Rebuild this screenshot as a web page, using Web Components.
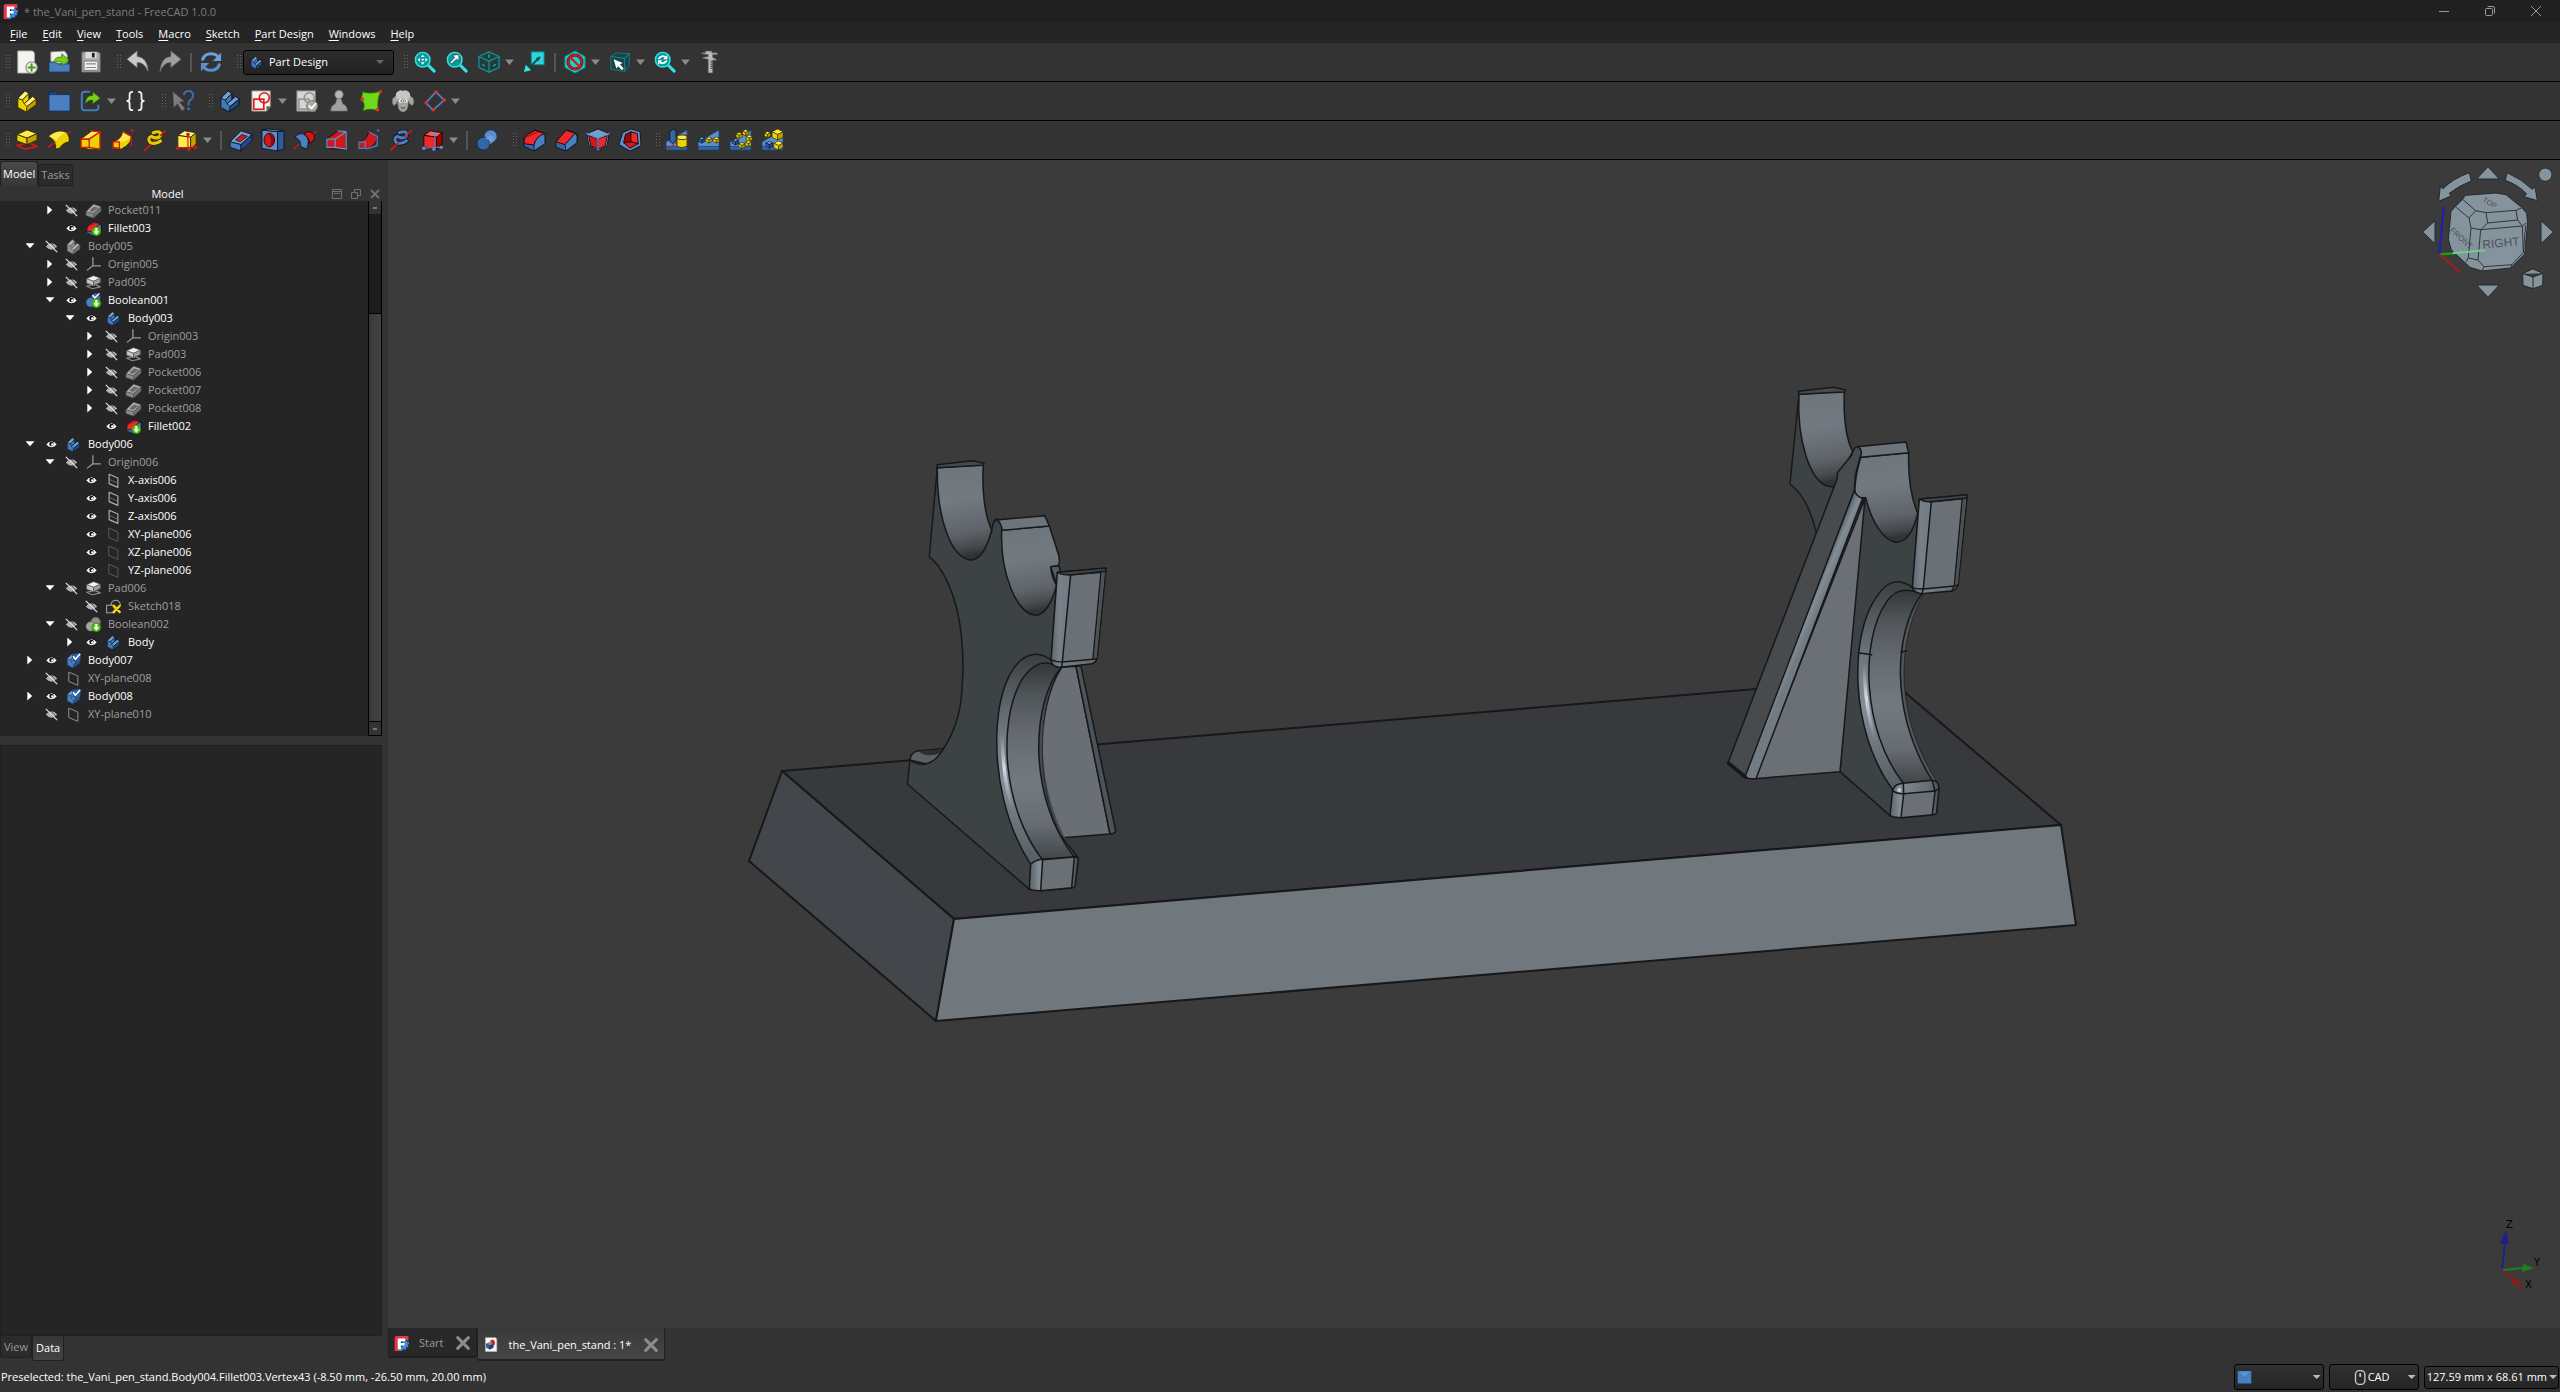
<!DOCTYPE html>
<html lang="en">
<head>
<meta charset="utf-8">
<title>the_Vani_pen_stand - FreeCAD 1.0.0</title>
<style>
html, body { margin: 0; height: 100%; }
body { background: #333; color: #fff; font: 11px/16px "Open Sans", "Noto Sans", sans-serif; overflow: hidden; }
</style>
</head>
<body>
<fc-app></fc-app>
<script>
/* ---------- icon library: every icon lives in a 24 x 24 box ---------- */
const poly = (pts, fill, stroke = '#0b1521', w = 1) =>
  `<polygon points="${pts}" fill="${fill}" stroke="${stroke}" stroke-width="${w}" stroke-linejoin="round"/>`;
const line = (d, stroke, w = 1.5, extra = '') =>
  `<path d="${d}" fill="none" stroke="${stroke}" stroke-width="${w}" stroke-linejoin="round" stroke-linecap="round" ${extra}/>`;
const dot = (x, y, r, fill, stroke = 'none', w = 1) =>
  `<circle cx="${x}" cy="${y}" r="${r}" fill="${fill}" stroke="${stroke}" stroke-width="${w}"/>`;

const bracket = (top, mid, dark, edge) =>
  poly('2,9 2,19 11,24 22,16 22,10 18,7 14,10 14,4 10,1', mid, edge) +
  poly('2,9 10,1 14,4 7,11', top, edge) +
  poly('7,11 14,4 14,10 9,15', mid, edge) +
  poly('9,15 18,7 22,10 12,18', top, edge) +
  poly('12,18 22,10 22,16 11,24', dark, edge);
const box = (top, left, right, edge) =>
  poly('2,7 9,2 22,4 16,9', top, edge) + poly('2,7 16,9 16,22 2,20', left, edge) + poly('16,9 22,4 22,16 16,22', right, edge);
const cubeIso = (x, y, s, top, left, right, edge) =>
  poly(`${x},${y - s} ${x + s},${y - s / 2} ${x},${y} ${x - s},${y - s / 2}`, top, edge, .7) +
  poly(`${x - s},${y - s / 2} ${x},${y} ${x},${y + s} ${x - s},${y + s / 2}`, left, edge, .7) +
  poly(`${x},${y} ${x + s},${y - s / 2} ${x + s},${y + s / 2} ${x},${y + s}`, right, edge, .7);
const yc = (x, y, s) => cubeIso(x, y, s, '#ffe94e', '#edd400', '#c4a000', '#302b00');
const bc = (x, y, s) => cubeIso(x, y, s, '#729fcf', '#3465a4', '#204a87', '#0b1521');
const pocket = (top, left, right, hole, edge) =>
  poly('0,14 12,2 24,6 12,17', top, edge) + poly('0,14 12,17 12,24 0,20', left, edge) +
  poly('12,17 24,6 24,13 12,24', right, edge) + poly('6,12 13,6 19,8 11,14', hole, edge, .8);
const pad = (top, left, right, edge, base) =>
  poly('1,18 10,22 23,19 14,15', 'none', base, 1.8) +
  poly('1,6 12,1 23,5 12,10', top, edge) + poly('1,6 12,10 12,17 1,13', left, edge) + poly('12,10 23,5 23,12 12,17', right, edge);
const lens = (inner) => line('M15 15L22 22', '#34e0e2', 3.4) + dot(9.5, 9.5, 8, '#06989a', '#34e0e2', 1.6) + inner;
const green = dot(16.5, 16.5, 7.2, '#4bc40d', '#2f7d06') + `<path d="M14.800 11h3.400v5.500h2.800L16.500 22l-4.500-5.500h2.800z" fill="#fff"/>`;
const check = line('M12 6L15 10L22 2', '#fff', 2.6);
const bools = (a, b, e) => dot(15.5, 8, 7.5, a, e) + dot(7.5, 15, 7.5, b, e);
const fil = poly('1,9 13,1 24,5 24,16 12,24 1,19', '#3465a4') +
  `<path d="M1 16Q1 8 6 5.500L13 1.500L24 5Q14 8 12 17.500Z" fill="#ef2929" stroke="#280000"/><path d="M4 9Q8 6 16 3.500" stroke="#a40000" fill="none"/>` +
  `<path d="M12 17.500Q14 8 24 5V16L12 24Z" fill="#4a7fc0" stroke="#0b1521"/>`;
const axis3 = (c) => line('M11 1V14H23M11 14L2 21', c, 2);
const plane = (c, w = 1.8) => line('M5 2L19 8V23L5 17Z', c, w);
const sk = (c) => `<rect x="3" y="10" width="11" height="11" fill="none" stroke="${c}" stroke-width="1.800"/><circle cx="14.500" cy="8.500" r="5.500" fill="none" stroke="${c}" stroke-width="1.800"/>`;
const wedge = poly('0,14 23,1 23,23 0,23', '#5b8fce', '#1d406f') + poly('0,19 23,19 23,23 0,23', '#3465a4', '#16325c', .6);

const ICONS = {
  logo: `<path d="M1 3Q1 0 4 0H23V7H10V24H1Z" fill="#e0394a"/><path d="M13 8H20L22 10L24 9V13L22 14L23 18L20 18L19 22L15 21L12 24H8V17H13Z" fill="#3c86d8"/><path d="M6 4H18V8.500H11V11H17V15H11V21H6Z" fill="#fff"/>`,
  new: poly('2,0 18,0 20,2 20,24 2,24', '#f3f3f1', '#b8b8b4') + dot(17, 18, 6.2, '#eeeeec', '#888a85', 1.2) + line('M17 14.500V21.500M13.500 18H20.500', '#4e9a06', 2.2),
  open: poly('3,1 18,0 21,4 21,16 3,16', '#f3f3f1', '#888') + poly('1,12 8,12 10,14 24,14 24,23 1,23', '#4a7fc0', '#16325c') + `<path d="M6 13Q8 5 15 7L15 3L23 10L16 16L15 12Q11 11 6 13Z" fill="#73d216" stroke="#2c6b04" stroke-width=".8"/>`,
  save: poly('2,1 20,1 22,3 22,23 2,23', '#a9aaa6', '#666') + `<rect x="6" y="1" width="12" height="7" fill="#ddd"/><rect x="13" y="2" width="3" height="5" fill="#222"/><rect x="4.500" y="11" width="15" height="10" fill="#f2f2f0" stroke="#777"/>` + line('M7 14H17M7 18H17', '#888', 1.2),
  undo: `<path d="M0 9L11 0V6Q22 7 23 22Q19 12 11 12.500V18Z" fill="#c9c9c6" stroke="#777" stroke-width=".7"/>`,
  redo: `<path d="M24 9L13 0V6Q2 7 1 23Q5 12 13 12.500V18Z" fill="#9f9f9c" stroke="#666" stroke-width=".7"/>`,
  refresh: line('M3 9Q5 3 12 3Q18 3 20 7', '#6a9fdb', 3.4) + `<path d="M23 2V11H14Z" fill="#6a9fdb"/>` + line('M21 15Q19 21 12 21Q6 21 4 17', '#5b8fce', 3.4) + `<path d="M1 22V13H10Z" fill="#5b8fce"/>`,
  body: bracket('#729fcf', '#4279bb', '#204a87', '#0b1521'),
  bodyGray: bracket('#b4b4b2', '#8f8f8d', '#6f6f6d', '#555'),
  group: bracket('#fff28a', '#edd400', '#c4a000', '#302b00'),
  zoomFit: lens(`<path d="M9.500 4l2.200 2.600h-4.400zM9.500 15l2.200-2.600h-4.400zM4 9.500l2.600-2.200v4.400zM15 9.500l-2.600-2.200v4.400z" fill="#fff"/>` + dot(9.5, 9.5, 1.2, '#fff')),
  zoomSel: lens(`<path d="M14 4V11L11.500 8.800L6 14L4.500 12.500L9.500 7L7.300 4.500Z" fill="#fff" stroke="#222" stroke-width=".6"/>`),
  zoomSync: lens(line('M5.500 8Q9.500 3.500 13.500 7.500M13.500 11Q9.500 15.500 5.500 11.500', '#fff', 2) + `<path d="M14.500 4V9H10ZM4.500 15V10H9Z" fill="#fff"/>`),
  cubeWire: poly('12,1 23,6 23,18 12,23 1,18 1,6', '#203c3d', '#159496', 1.4) + line('M1 6L12 11L23 6M12 11V23', '#159496', 1.3) + line('M12 4V7M5 15L7 16M19 15L17 16', '#34e0e2', 1),
  linkView: `<rect x="9" y="1" width="14" height="14" fill="#2bd6d8" stroke="#0b8c8e"/>` + line('M18 7L6 19', '#0a4a4b', 2) + dot(16, 9, 1.5, 'none', '#0a4a4b') + `<path d="M1 23L3 15L9 21Z" fill="#34e0e2"/>`,
  noDraw: poly('12,0 23,6 23,18 12,24 1,18 1,6', '#16d0d2', '#0c8c8e') + dot(12, 12, 7.6, 'none', '#5a0c0c', 3.4) + dot(12, 12, 7.6, 'none', '#d11a1a', 2) + line('M7 7L17 17', '#d11a1a', 2.4),
  selCube: poly('2,6 8,2 22,3 22,16 17,22 2,20', '#164446', '#187e80') + line('M2 6L17 8L22 3M17 8V22', '#187e80', 1.3) + `<path d="M5 9L15 13L12 14.500L16 19L14 21L10 16.500L8 19Z" fill="#fff"/>`,
  caliper: `<path d="M7 0H14V2H20V4H15V7L19 9V10H15V24H10V9L4 8V7L10 6V4L3 3V2H7Z" fill="#b9bab5" stroke="#555" stroke-width=".7"/>` + line('M13 11H14.500M13 13H14.500M13 15H14.500M13 17H14.500M13 19H14.500', '#333', 1),
  folder: poly('1,2 9,2 11,5 11,8 1,8', '#204a87', '#122b50') + poly('1,5 24,5 24,23 1,23', '#4a80c2', '#16325c'),
  link: line('M10 2H5Q2 2 2 5V19Q2 22 5 22H17Q20 22 20 19V17', '#3f7ac2', 2.2) + `<path d="M6 15Q6 6 14 6V2L22 9L14 15V11Q9 10 6 15Z" fill="#73d216" stroke="#2c6b04" stroke-width=".8"/>`,
  braces: line('M8 2Q5 2 5 5V9Q5 12 2.500 12Q5 12 5 15V19Q5 22 8 22M15 2Q18 2 18 5V9Q18 12 20.500 12Q18 12 18 15V19Q18 22 15 22', '#eee', 2),
  whats: `<path d="M1 2L13 12L8 13L14 20L11 23L6 15L2 19Z" fill="#7d7d7a" stroke="#555" stroke-width=".6"/>` + line('M13 5Q14 1 18 1Q23 1 23 6Q23 9 20 11Q18 12 18 16', '#3a6ea8', 2.2) + dot(18, 20.5, 1.7, '#3a6ea8'),
  sketch: poly('1,1 21,1 21,18 17,23 1,23', '#f4f4f0', '#9a9a94') + poly('21,18 17,18 17,23', '#55554f', '#888', .6) + sk('#e01b1b'),
  sketchGray: `<rect x="1" y="1" width="20" height="22" fill="#d5d5d2" stroke="#8b8b88"/>` + sk('#949491') + dot(17.5, 17.5, 6, '#a9a9a6', '#777') + line('M14.500 17.500L17 20L21.500 15', '#fff', 2),
  pawn: `<path d="M3 23Q3 17 8 15L10 9H14L16 15Q21 17 21 23Z" fill="#a0a09d" stroke="#6c6c69" stroke-width=".7"/>` + dot(12, 5, 4.6, '#b5b5b2', '#6c6c69', .7),
  binder: `<path d="M3 2Q12 5 23 1Q18 10 20 23Q11 19 3 23Q7 14 1 11Z" fill="#6fd81a" stroke="#2c6b04"/>` + dot(22, 2, 2, '#ef2929') + dot(2.5, 10, 2, '#ef2929') + dot(19, 21.5, 2, '#ef2929'),
  sheep: `<path d="M6 5L1 9Q-1 14 2 17Q5 16 6 12L7 20Q9 24 12 24Q15 24 17 20L18 12Q19 16 22 17Q25 14 23 9L18 5Z" fill="#a6a6a3" stroke="#6f6f6c" stroke-width=".7"/><path d="M5 9Q3 4 6 2Q9 -1 12 1Q15 -1 18 2Q21 4 19 9Q15 11 12 9Q9 11 5 9Z" fill="#c6c6c3"/>` + dot(9.5, 12, 2, '#fff') + dot(15, 12, 2, '#fff') + dot(10, 12, .9, '#222') + dot(14.5, 12, .9, '#222') + line('M10 19Q12 21 14 19', '#555', 1.2),
  datum: line('M13 2L22 11L10 22L2 14Z', '#4a80c2', 1.8) + dot(13, 2.5, 2, '#ef2929') + dot(22, 11, 2, '#ef2929') + dot(10, 21.5, 2, '#ef2929') + dot(2.5, 14, 2, '#ef2929'),
  pad: pad('#ffe94e', '#edd400', '#c4a000', '#302b00', '#d11818'),
  padGray: pad('#f1f1ef', '#c6c6c4', '#9c9c9a', '#555', '#8a8a88'),
  revolve: line('M0 20L24 3', '#d11818', 1.6) + `<path d="M1 8Q10 0 20 4Q24 8 23 14Q16 15 13 21L9 22Q8 13 1 8Z" fill="#c4a000" stroke="#302b00"/><path d="M1 8Q10 0 20 4Q12 7 9 14Q6 10 1 8Z" fill="#ffe94e"/><path d="M9 14Q12 7 20 4Q23 8 22.500 13Q16 15 12 20L9 21Z" fill="#edd400"/>`,
  loft: poly('1,11 13,2 22,3 22,22 9,22 1,20', '#edd400', '#302b00') + poly('1,11 13,2 22,3 10,11', '#ffe94e', '#302b00') + line('M1 11H10V20H1ZM13 2L22 3V22L10 20M10 11L22 3', '#d11818', 1.5),
  pipe: `<path d="M1 14Q10 12 12 2L21 8Q22 16 10 22L1 20Z" fill="#edd400" stroke="#302b00"/><path d="M8 14Q17 14 21 8L12 3Q12 10 4 14Z" fill="#ffe94e"/>` + line('M1 14H8V21H1ZM12 3L21 8V18', '#d11818', 1.5) + dot(22, 1.5, 1.4, '#d11818'),
  helix: line('M1 23L23 2', '#d11818', 1.6) + line('M10 4Q19 1 18 7Q15 12 8 8Q3 10 7 15Q13 17 18 13', '#302b00', 5) + line('M10 4Q19 1 18 7Q15 12 8 8Q3 10 7 15Q13 17 18 13', '#e3c90c', 3.4) + line('M1 23L7 17M18 7L23 2', '#d11818', 1.6),
  prim: box('#fff28a', '#ffe94e', '#c4a000', '#302b00') + line('M13 7V20L2 21M13 20L22 20', '#d11818', 1.2) + dot(13, 6, 2, '#d11818') + dot(2, 21, 2, '#d11818') + dot(21, 20, 2, '#d11818') + dot(14, 22, 2, '#d11818'),
  pocket: pocket('#729fcf', '#4a80c2', '#204a87', '#d11818', '#0b1521'),
  pocketGray: pocket('#b3b3b1', '#8b8b89', '#71716f', '#6a6a68', '#555'),
  hole: poly('0,1 17,3 17,24 0,21', '#5b8fce') + poly('0,1 7,0 24,2 17,3', '#729fcf') + poly('17,3 24,2 24,22 17,24', '#2b5b9c') + `<ellipse cx="8" cy="12" rx="5.800" ry="7.500" fill="#d11818" stroke="#280000"/><path d="M6 5Q12 10 9 19Q14 18 13.500 11Q12 5 6 5Z" fill="#8d0b0b"/>`,
  groove: line('M0 21L24 3', '#d11818', 1.6) + `<path d="M1 9Q6 3 12 6Q18 11 14 22L7 19Q8 12 1 9Z" fill="#4a80c2" stroke="#0b1521"/><path d="M12 4Q17 1 22 6L22 12Q20 13 17 16Q17 9 12 7Z" fill="#d11818" stroke="#280000"/>`,
  subLoft: poly('1,11 13,2 22,3 22,22 9,22 1,20', '#d11818', '#280000') + line('M1 11H10V20H1ZM13 2L22 3V22L10 20M10 11L22 3', '#5b93d8', 1.4),
  subPipe: `<path d="M1 14Q10 12 12 2L21 8Q22 16 10 22L1 20Z" fill="#d11818" stroke="#280000"/>` + line('M1 14H8V21H1ZM12 3L21 8V18L9 22', '#4a80c2', 1.5) + dot(22, 1.5, 1.2, '#4a80c2'),
  subHelix: line('M1 23L23 2', '#d11818', 1.6) + line('M10 4Q19 1 18 7Q15 12 8 8Q3 10 7 15Q13 17 18 13', '#0b1521', 5) + line('M10 4Q19 1 18 7Q15 12 8 8Q3 10 7 15Q13 17 18 13', '#4a80c2', 3.2) + line('M1 23L9 15M16 9L23 2', '#d11818', 1.6),
  subPrim: box('#ff5a5a', '#ef2929', '#a40000', '#280000') + line('M14 8V20L2 21M14 20L22 20', '#4a80c2', 1.2) + dot(14, 6, 1.8, '#5b93d8') + dot(2, 21, 1.8, '#5b93d8') + dot(21, 20, 1.8, '#5b93d8') + dot(13, 22, 1.8, '#5b93d8'),
  boolean: dot(16, 8, 7, '#5b8fce', '#1a3c6c') + dot(8, 16, 7, '#3465a4', '#122b50') + `<path d="M10 11Q16 11 15 17Q20 14 20 9Q14 5 10 11Z" fill="#729fcf"/>`,
  fillet: fil,
  chamfer: poly('1,14 13,1 24,5 24,15 12,24 1,20', '#3465a4') + poly('1,14 12,1.5 22,4.500 11,17', '#ef2929', '#280000') + poly('11,17 22,4.500 24,8 24,15 12,24', '#4a7fc0'),
  draft: poly('0,5 12,0 24,5 22,18 12,24 2,18', '#729fcf') + poly('2,7 11.500,11 11.500,22 4,18', '#d11818', '#280000') + poly('12.500,11 22,7 20,18 12.500,22', '#ef2929', '#280000') + line('M0 5L12 10L24 5M12 10V23', '#5b93d8', 1.5),
  thick: poly('4,4 13,0 23,3 24,18 12,24 0,17', '#5b8fce') + poly('7,6 13,3 13,15 5,15', '#8d0b0b', '#280000') + poly('13,3 20,5 21,16 13,14', '#ef2929', '#280000') + poly('5,15 13,14 21,16 12,21', '#d11818', '#280000'),
  mirror: wedge + poly('4,3 8,0 11,2 11,13 7,16 4,13', '#3465a4') + line('M2 22L23 6', '#d11818', 1.3, 'stroke-dasharray="3 2"') + `<path d="M12 9V19Q17 22 23 19V9Z" fill="#edd400" stroke="#302b00"/><ellipse cx="17.500" cy="9" rx="5.500" ry="2.500" fill="#ffe94e" stroke="#302b00"/>`,
  linear: wedge + bc(4, 12, 3.4) + yc(12, 12, 3.4) + yc(20, 12, 3.4),
  polar: wedge + yc(10, 7, 3.4) + yc(17, 4, 3.4) + yc(21, 10, 3.4) + bc(6, 14, 3.4) + yc(13, 18, 3.4) + yc(20, 16, 3.4),
  multi: wedge + yc(6, 6, 3.4) + yc(17, 6, 6) + bc(8, 17, 3.8) + yc(18, 18, 5),
  fillet2: fil + green,
  boolean2: bools('#3c6cae', '#4a80c2', '#1a3c6c') + line('M11 4L14 8L21 1', '#fff', 2.2) + green,
  boolGray: bools('#8f8f8d', '#a5a5a3', '#666') + green,
  bodyCheck: bracket('#729fcf', '#4a80c2', '#2a5797', '#1a3c6c') + poly('9,2 21,0 24,3 22,14 14,15', '#2f62a8', '#1a3c6c') + check,
  origin: axis3('#9b9b99'),
  axis: plane('#b0b0ae', 1.8) + line('M5 10L18 16', '#777775', 1.3),
  planeDark: plane('#6b5d5b', 1.4),
  plane: plane('#8e8e8c', 1.6),
  sketchX: `<rect x="1" y="10" width="13" height="12" fill="none" stroke="#9a9a98" stroke-width="1.800"/>` + line('M8 9Q9 2 16 2Q22 3 23 9', '#9a9a98', 1.8) + line('M12 11L22 21M22 11L12 21', '#f5d90a', 3.6),
  doc: poly('4,1 20,1 22,3 22,23 4,23', '#f6f6f4', '#bbb') + bc(11, 14, 5.5) + `<path d="M11 6L16 4L19 7V13L16 11Z" fill="#d11818"/>`,
  mail: `<rect x="1" y="2" width="22" height="20" fill="#4a80c2" stroke="#1d406f"/><path d="M1 2L12 13L23 2" fill="#5b92d4" stroke="#35629b"/>`,
  mouse: `<rect x="4" y="1" width="15" height="22" rx="6" fill="none" stroke="#c9c9c6" stroke-width="2.200"/><rect x="10" y="5" width="3" height="6" rx="1" fill="#c9c9c6"/>`,
  close: line('M4 4L20 20M20 4L4 20', '#8c8c8c', 4.6)
};

/* ---------- base class ---------- */
class FcElement extends HTMLElement {
  constructor() { super(); this.attachShadow({ mode: 'open' }); }
  paint(css, html) {
    this.shadowRoot.innerHTML = `<style>:host{box-sizing:border-box}*{box-sizing:border-box}button,select{font:inherit;color:inherit;margin:0}${css}</style>${html}`;
  }
}

customElements.define('fc-icon', class extends FcElement {
  connectedCallback() {
    this.paint(':host{display:inline-flex;flex:none;width:var(--icon,22px);height:var(--icon,22px)}svg{width:100%;height:100%;display:block;overflow:visible}',
      `<svg viewBox="0 0 24 24" aria-hidden="true">${ICONS[this.getAttribute('name')]}</svg>`);
  }
});

customElements.define('fc-titlebar', class extends FcElement {
  connectedCallback() {
    this.paint(`:host{display:flex;align-items:center;height:23px;background:#202020;color:#7d7d7d;padding-left:3px;--icon:15px}
      h1{font:inherit;margin:0 auto 0 6px}
      button{width:46px;height:23px;background:none;border:0;padding:0 2px 2px 0;display:flex;align-items:center;justify-content:center}
      svg{width:12px;height:12px;fill:none;stroke:#9a9a9a}`,
      `<fc-icon name="logo"></fc-icon><h1><slot></slot></h1>
      <button aria-label="Minimize"><svg viewBox="0 0 12 12"><path d="M1 6.500H11"/></svg></button>
      <button aria-label="Restore"><svg viewBox="0 0 12 12"><rect x="1.500" y="3.500" width="7" height="7" rx="1"/><path d="M3.500 1.500H9Q10.500 1.500 10.500 3V8.500"/></svg></button>
      <button aria-label="Close"><svg viewBox="0 0 12 12"><path d="M1 1L11 11M11 1L1 11"/></svg></button>`);
  }
});

customElements.define('fc-menubar', class extends FcElement {
  connectedCallback() {
    const items = this.getAttribute('items').split(',');
    this.paint(`:host{display:flex;height:20px;background:#252525;padding-left:3px}
      nav{display:flex;align-items:center;gap:1px}
      button{background:none;border:0;padding:3px 7px 1px;line-height:16px;white-space:nowrap}
      u{text-underline-offset:2px}`,
      `<nav>${items.map(t => `<button><u>${t[0]}</u>${t.slice(1)}</button>`).join('')}</nav>`);
  }
});

customElements.define('fc-toolbar-row', class extends FcElement {
  connectedCallback() {
    this.paint(':host{display:flex;align-items:center;gap:4px;height:39px;background:#333;border-bottom:1px solid #000}', '<slot></slot>');
  }
});

/* tools: icon names; "name+" adds a drop-down arrow, "|" is a separator */
customElements.define('fc-toolbar', class extends FcElement {
  connectedCallback() {
    const tools = (this.getAttribute('tools') || '').split(' ').filter(Boolean);
    const html = tools.map(t => {
      if (t === '|') return '<i class="sep"></i>';
      const drop = t.endsWith('+'), name = drop ? t.slice(0, -1) : t;
      return `<button class="tool" aria-label="${name}"><fc-icon name="${name}"></fc-icon></button>` +
        (drop ? `<button class="drop" aria-label="${name} options"></button>` : '');
    }).join('');
    this.paint(`:host{display:flex;align-items:center;height:38px}
      .grip{width:6px;height:16px;margin-left:5px;background:radial-gradient(circle,#666 0 0.9px,transparent 1px) 0 0/3px 3px}
      .tool{width:32px;height:32px;padding:0;border:0;background:none;display:flex;align-items:center;justify-content:center}
      .drop{width:9px;height:12px;margin-right:4px;padding:0;border:0;background:#8a8a8a;clip-path:polygon(0 30%,100% 30%,50% 75%)}
      .sep{width:2px;height:19px;margin:0 3px 0 4px;background:#555}`,
      `<span class="grip"></span>${html}<slot></slot>`);
  }
});

customElements.define('fc-workbench', class extends FcElement {
  connectedCallback() {
    this.paint(`:host{display:flex;align-items:center;margin-left:1px;width:151px;height:25px;--icon:13px;border:1px solid #000;border-radius:3px;background:linear-gradient(#2d2d2d,#222)}
      fc-icon{margin:0 0 0 6px}
      select{flex:1;appearance:none;background:none;border:0;height:23px;padding:0 0 0 6px;outline:0}
      i{width:8px;height:4px;margin-right:9px;background:#666;clip-path:polygon(0 0,100% 0,50% 100%)}`,
      `<fc-icon name="body"></fc-icon><select aria-label="Workbench"><option>Part Design</option></select><i></i>`);
  }
});

/* ---------- model tree ---------- */
customElements.define('fc-tree-item', class extends FcElement {
  connectedCallback() {
    const level = +this.getAttribute('level'), state = this.getAttribute('state') || '', off = this.hasAttribute('off');
    const eye = off
      ? `<svg viewBox="0 0 16 16"><path d="M1 8Q8 0 15 8Q8 16 1 8Z" fill="#b4b4b4"/><path d="M3 3L13 14M6 2L14 11" stroke="#252525" stroke-width=".8"/><path d="M1 1L15 15" stroke="#e6e6e6" stroke-width="1.400"/></svg>`
      : `<svg viewBox="0 0 16 16"><path d="M1 8Q8 -1 15 8Q8 16 1 8Z" fill="#fff" stroke="#000"/><circle cx="8" cy="7.500" r="2.800" fill="#111"/><circle cx="9" cy="8" r="1.500" fill="#fff"/></svg>`;
    this.paint(`:host{display:flex;align-items:center;height:18px;padding-left:${24 + 20 * level}px;color:${off ? '#9f9f9f' : '#fff'};--icon:15px}
      button{width:12px;height:12px;padding:0;border:0;background:none;display:flex;align-items:center;justify-content:center}
      button i{width:9px;height:9px;background:#fff;clip-path:${state === 'open' ? 'polygon(0 20%,100% 20%,50% 75%)' : 'polygon(20% 0,75% 50%,20% 100%)'}}
      .gap{width:12px}
      svg{width:13px;height:13px;margin:0 8px 0 9px}
      span.t{margin-left:7px;white-space:nowrap}`,
      `${state ? '<button aria-label="Toggle"><i></i></button>' : '<span class="gap"></span>'}${eye}<fc-icon name="${this.getAttribute('icon')}"></fc-icon><span class="t"><slot></slot></span>`);
  }
});

customElements.define('fc-tree', class extends FcElement {
  connectedCallback() {
    this.paint(`:host{display:flex;height:535px;background:#252525}
      .rows{flex:1}
      .bar{width:14px;display:flex;flex-direction:column;border:1px solid #000;border-width:0 1px 1px;background:#1d1d1d}
      .bar button{height:13px;padding:0;border:0;background:#333;display:flex;align-items:center;justify-content:center}
      .bar button i{width:4px;height:2px;background:#777}
      .thumb{flex:1;margin-top:99px;background:linear-gradient(90deg,#383838,#444);border:1px solid #000;border-width:1px 0}`,
      `<div class="rows"><slot></slot></div><div class="bar"><button aria-label="Up"><i></i></button><div class="thumb"></div><button aria-label="Down"><i></i></button></div>`);
  }
});

customElements.define('fc-dock', class extends FcElement {
  connectedCallback() {
    this.paint(`:host{display:flex;flex-direction:column;width:388px;flex:none;padding-right:6px;background:#333}
      .tabs{display:flex;height:26px}
      .tabs button{border:1px solid #202020;border-radius:3px 3px 0 0;padding:0 2px;color:#9a9a9a;background:#2b2b2b;height:22px;margin-top:4px}
      .tabs button.on{color:#fff;background:linear-gradient(#4a4a4a,#363636);height:25px;margin-top:1px;border-bottom:0}
      header{display:flex;align-items:center;height:15px;gap:9px;padding-right:2px}
      h2{font:inherit;margin:0;flex:1;padding-left:12px;line-height:15px;text-align:center}
      header button{width:10px;height:10px;padding:0;border:0;background:none}
      header svg{display:block;width:10px;height:10px;fill:none;stroke:#707070}
      .props{flex:1;margin-top:9px;background:#252525;border:1px solid #202020}
      .low{display:flex;height:26px}
      .low button{border:1px solid #202020;border-top:0;border-radius:0 0 3px 3px;padding:0 3px;color:#9a9a9a;background:#2b2b2b;height:22px}
      .low button.on{color:#fff;background:linear-gradient(#363636,#444);height:25px}`,
      `<div class="tabs"><button class="on">Model</button><button>Tasks</button></div>
      <header><h2>Model</h2>
        <button aria-label="Options"><svg viewBox="0 0 10 10"><path d="M.500 .500H9.500V9.500H.500ZM1 2.500H9M2 4.500H8"/></svg></button>
        <button aria-label="Float"><svg viewBox="0 0 10 10"><path d="M.500 3.500H6.500V9.500H.500ZM3.500 3V.500H9.500V6.500H7"/></svg></button>
        <button aria-label="Close"><svg viewBox="0 0 10 10"><path d="M1 1L9 9M9 1L1 9" stroke-width="2"/></svg></button>
      </header>
      <slot></slot><div class="props"></div>
      <div class="low"><button>View</button><button class="on">Data</button></div>`);
  }
});

/* ---------- 3D scene ---------- */
customElements.define('fc-scene', class extends FcElement {
  connectedCallback() {
    const edge1L = 'M452 1273C300 1040 330 655 465 643C490 642 505 652 520 668';
    const leftStand = `
      <path class="k" fill="#5a6065" d="M90 960Q92 938 112 933L200 925L190 965L140 972Z"/>
      <path fill="#2b2f31" d="M115 933L195 927L180 940Q140 955 115 933Z"/>
      <path class="k" fill="#3d4244" d="M172 80L148 350Q160 360 175 378C225 450 250 560 249 690L245 762C240 830 215 890 187 932C160 975 120 985 90 960L82 1032L448 1348L460 1260L400 900L512 690L515 655L530 435L530 400L365 245Q352 233 345 240C338 250 336 262 335 273L290 350Z"/>
      <path class="k" fill="#6a6f76" d="M545 682L588 679L690 1182L548 1193C465 1080 460 810 545 682Z"/>
      <path class="k" fill="#4c545a" d="M588 679L603 679L707 1172Q704 1182 690 1182Z"/>
      <path class="k" fill="url(#cup)" d="M172 83L310 74C305 150 314 225 335 270C320 330 300 359 272 360C215 355 170 240 172 83Z"/>
      <path class="k" fill="#454a4e" d="M171 74L278 62L312 70L309 76L172 83Z"/>
      <path class="k" fill="url(#cup)" d="M365 270L508 258L536 345Q542 372 532 378L512 380Q515 415 530 435C515 490 495 526 465 526C410 520 360 400 365 270Z"/>
      <path class="k" fill="#6d757b" d="M350 240L494 227L508 258L367 271Q362 245 350 240Z"/>
      <path class="k" fill="#555b60" d="M512 380L536 377L543 398L530 432Z"/>
      <path fill="url(#band1)" d="${edge1L}L512 672C485 665 455 675 425 720C350 850 370 1110 488 1260Z"/>
      <path fill="url(#band2)" d="M488 1260C370 1110 350 850 425 720C455 675 485 665 545 680C455 780 440 1070 582 1250Z"/>
      <path fill="#454b50" d="M545 682C455 780 440 1070 582 1250L592 1252C465 1080 460 800 545 682Z"/>
      <path fill="none" stroke="url(#shine)" stroke-width="10" d="M366 880C368 980 380 1060 400 1110"/>
      <path class="l" d="${edge1L}M488 1260C370 1110 350 850 425 720C455 675 485 662 515 672M582 1250C440 1070 455 780 545 682M594 1253C570 1222 556 1205 546 1190"/>
      <path class="l thin" d="M546 1190C470 1060 465 810 545 682"/>
      <path class="k" fill="url(#rim)" d="M532 397L678 385L652 650Q650 670 632 672L540 682Q515 680 513 660Z"/>
      <path class="k" fill="#6b7077" d="M572 404L663 397L639 658L547 666Z"/>
      <path fill="#4b5256" d="M665 400L675 392L650 655L641 656Z"/>
      <path class="k" fill="#3f4447" d="M532 397L678 384L676 394L572 405Q545 405 532 397Z"/>
      <path class="l" d="M513 658Q525 666 547 666M639 658L652 656M547 666L545 682"/>
      <path class="k" fill="url(#foot)" d="M452 1273Q465 1260 488 1258L588 1250L595 1256L585 1338Q583 1343 575 1344L480 1352Q450 1352 448 1344Z"/>
      <path class="k" fill="#6b7077" d="M488 1259L583 1251L575 1343L482 1352Z"/>`;
    const rightStand = `
      <path class="k" fill="#3d4244" d="M297 72L270 342Q300 365 320 405Q342 450 350 495L420 340Z"/>
      <path class="k" fill="url(#cup)" d="M297 73L433 64C430 140 438 205 458 245L405 348Q400 352 385 349C330 335 290 210 297 73Z"/>
      <path class="k" fill="#454a4e" d="M295 64L400 52L436 60L433 66L297 73Z"/>
      <path class="k" fill="#3d4244" d="M488 385L420 1205L570 1337L600 1245C500 1100 490 830 560 695L638 655L655 430L500 380Z"/>
      <path class="k" fill="url(#cup)" d="M482 262L626 248C624 325 636 390 653 430C640 485 620 517 588 517C550 512 515 455 497 383L478 383Q462 378 465 350Q468 310 482 262Z"/>
      <path class="k" fill="#6d757b" d="M470 230L618 216L626 248L483 262Z"/>
      <path class="k" fill="#474b4d" d="M470 230Q483 230 484 250L466 315L463 362L138 1223L84 1178L412 325L412 308L455 255Q462 233 470 230Z"/>
      <path class="k" fill="#6b7077" d="M495 385L420 1205L165 1226Z"/>
      <path class="k" fill="url(#strip)" d="M463 362Q470 380 488 385L168 1226Q140 1228 136 1218Z"/>
      <path class="l thick" d="M86 1180L136 1221"/>
      <path fill="url(#band1)" d="M580 1262C445 1080 450 790 530 680C565 625 605 625 640 655L655 665C620 655 585 655 560 695C485 810 490 1080 610 1240Z"/>
      <path fill="url(#band2)" d="M610 1240C485 1080 480 810 560 695C585 655 620 655 665 672C580 790 570 1030 697 1232Z"/>
      <path fill="#50575c" d="M665 672C580 790 570 1030 697 1232L712 1238C590 1050 585 830 668 675Z"/>
      <path fill="none" stroke="url(#shine)" stroke-width="10" d="M492 880C494 980 506 1050 526 1110"/>
      <path class="l" d="M580 1262C445 1080 450 790 530 680C565 625 605 625 640 655M610 1240C485 1080 480 810 560 695C585 655 620 655 655 668M697 1232C570 1030 580 790 665 672M475 848L515 854M603 847L620 842"/>
      <path class="l thin" d="M712 1238C590 1050 585 830 668 675"/>
      <path class="k" fill="url(#rim)" d="M658 387L802 375L775 640Q770 660 755 663L665 671Q640 668 637 652Z"/>
      <path class="k" fill="#6b7077" d="M694 395L787 386L763 648L670 657Z"/>
      <path fill="#4b5256" d="M789 388L799 380L774 640L766 648Z"/>
      <path class="k" fill="#3f4447" d="M658 387L802 374L800 384L694 395Q670 396 658 387Z"/>
      <path class="l" d="M637 652Q648 658 670 657M763 648L775 645M670 657L665 671M763 648L755 663"/>
      <path class="k" fill="url(#foot)" d="M578 1262Q582 1242 610 1240L697 1231Q718 1234 717 1256L710 1328Q708 1333 700 1334L602 1343Q572 1342 570 1335Z"/>
      <path class="k" fill="#6b7077" d="M611 1271L705 1263L697 1334L603 1343Z"/>
      <path class="l" d="M578 1262Q590 1272 611 1271M610 1240L611 1271M697 1231L705 1263L717 1256"/>
      <circle cx="598" cy="1260" r="6" fill="#c2ccd3"/>`;
    this.paint(`:host{display:block;width:100%;height:100%}svg{display:block;width:100%;height:100%}
      .k,.l{stroke:#16181a;stroke-width:4.500;stroke-linejoin:round;stroke-linecap:round}.l{fill:none}.thin{stroke-width:2}.thick{stroke-width:11}
      .b{stroke:#16181a;stroke-width:2;stroke-linejoin:round}`,
      `<svg viewBox="388 160 2172 1168" role="img" aria-label="Pen stand model">
      <defs>
        <linearGradient id="cup" x1="0" y1="0" x2=".1" y2="1"><stop offset="0" stop-color="#6d757b"/><stop offset=".4" stop-color="#727a81"/><stop offset=".75" stop-color="#5f646a"/><stop offset=".92" stop-color="#45494c"/><stop offset="1" stop-color="#2f3335"/></linearGradient>
        <linearGradient id="band1" x1="0" y1="0" x2="0" y2="1"><stop offset="0" stop-color="#3a3e41"/><stop offset=".12" stop-color="#4c5256"/><stop offset=".35" stop-color="#6d757c"/><stop offset=".6" stop-color="#858e96"/><stop offset=".85" stop-color="#666d73"/><stop offset="1" stop-color="#575d62"/></linearGradient>
        <linearGradient id="band2" x1="0" y1="0" x2="0" y2="1"><stop offset="0" stop-color="#333739"/><stop offset=".15" stop-color="#4f5458"/><stop offset=".35" stop-color="#646a70"/><stop offset=".6" stop-color="#727a81"/><stop offset=".82" stop-color="#666c72"/><stop offset="1" stop-color="#414548"/></linearGradient>
        <linearGradient id="shine" gradientUnits="userSpaceOnUse" x1="0" y1="880" x2="0" y2="1110"><stop offset="0" stop-color="#aeb8c0" stop-opacity="0"/><stop offset=".45" stop-color="#d5dde3"/><stop offset="1" stop-color="#aeb8c0" stop-opacity="0"/></linearGradient>
        <linearGradient id="rim"><stop offset="0" stop-color="#5d646a"/><stop offset=".15" stop-color="#78818a"/><stop offset="1" stop-color="#5c6369"/></linearGradient>
        <linearGradient id="strip" gradientUnits="userSpaceOnUse" x1="290" y1="770" x2="325" y2="785"><stop offset="0" stop-color="#5a6167"/><stop offset=".5" stop-color="#838d95"/><stop offset="1" stop-color="#737b82"/></linearGradient>
        <linearGradient id="foot"><stop offset="0" stop-color="#5b6268"/><stop offset=".2" stop-color="#828c94"/><stop offset=".8" stop-color="#656c72"/><stop offset="1" stop-color="#4b5156"/></linearGradient>
      </defs>
      <polygon class="b" fill="#38393c" points="782,771 1888,678 2061,825 954,919"/>
      <polygon class="b" fill="#43474c" points="782,771 954,919 936,1021 749,861"/>
      <polygon class="b" fill="#70777d" points="954,919 2061,825 2076,925 936,1021"/>
      <g transform="translate(880 440) scale(.33333)">${leftStand}</g>
      <g transform="translate(1700 370) scale(.33333)">${rightStand}</g>
      </svg>`);
  }
});

/* view cube and navigation arrows, drawn in thirds of a pixel */
customElements.define('fc-navcube', class extends FcElement {
  connectedCallback() {
    this.paint(`:host{display:block;width:140px;height:150px}svg{display:block;width:100%;height:100%}
      .a{fill:#85939d;stroke:#23282c;stroke-width:3;stroke-linejoin:round}
      text{font-family:"Liberation Sans",sans-serif;fill:#4a535a}`,
      `<svg viewBox="180 480 420 450" role="img" aria-label="Navigation cube">
      <path class="a" d="M384 500L418 537H350ZM384 892L350 855H418ZM188 696L225 662V731ZM580 696L543 662V731Z"/>
      <path class="a" d="M328 518L334 543Q295 558 268 580L273 588L236 604L241 558L249 566Q280 535 328 518ZM441 518Q485 537 517 568L525 560L532 602L492 590L500 582Q475 555 436 541Z"/>
      <circle class="a" cx="556" cy="524" r="20"/>
      <path class="a" d="M518 807L549 820L548 856L519 866L489 856L488 821ZM488 821L519 831L549 820M519 831V866"/>
      <path class="a" d="M316 586L408 579L438 584L486 623L500 640L503 668L494 762L452 804L366 813L330 802L274 750L265 718L273 634Z"/>
      <g fill="none" stroke="#30363b" stroke-width="3">
        <path d="M308 598L347 632L378 638L468 631L486 623M316 586L308 598L286 620L327 654L347 632M286 620L273 634M327 654L333 684L362 689L383 669L378 638M383 669L473 660L468 631M473 660L487 678L500 668M362 689L354 780L372 800L456 794L490 757L487 678M333 684L325 774L318 786M325 774L354 780M362 689L487 678M372 800L366 813M456 794L452 804M497 676L490 757"/>
      </g>
      <text x="368" y="746" font-size="36" transform="rotate(-5 368 746)">RIGHT</text>
      <text x="268" y="692" font-size="24" transform="rotate(43 268 692)">FRONT</text>
      <text x="366" y="604" font-size="22" transform="rotate(30 366 604)">TOP</text>
      <path d="M251 620L238 762" stroke="#2020a8" stroke-width="7"/>
      <path d="M240 763L280 760" stroke="#19a019" stroke-width="7"/><path d="M278 760L375 751" stroke="#6fcf8a" stroke-width="6"/>
      <path d="M238 763L303 819" stroke="#a81c1c" stroke-width="6"/>
      </svg>`);
  }
});

customElements.define('fc-axiscross', class extends FcElement {
  connectedCallback() {
    this.paint(`:host{display:block;width:60px;height:80px}svg{display:block;width:100%;height:100%}
      text{font:10px "DejaVu Sans",sans-serif;fill:#000}`,
      `<svg viewBox="0 0 60 80" role="img" aria-label="Axis cross">
      <path d="M12 55L15 28" stroke="#20208c" stroke-width="2"/><path d="M16 15L10 29H19Z" fill="#20208c"/>
      <path d="M12 55L34 53" stroke="#208020" stroke-width="2"/><path d="M44 53L33 49L32 57Z" fill="#208020"/>
      <path d="M12 55L24 65" stroke="#802020" stroke-width="2"/><path d="M34 74L25 61L20 68Z" fill="#802020"/>
      <text x="16" y="13">Z</text><text x="44" y="51">Y</text><text x="35" y="73">X</text>
      </svg>`);
  }
});

customElements.define('fc-viewport', class extends FcElement {
  connectedCallback() {
    this.paint(`:host{display:flex;flex-direction:column;flex:1;min-width:0}
      .view{position:relative;flex:1;min-height:0;background:#3b3b3b}
      fc-navcube{position:absolute;right:0;top:0}
      fc-axiscross{position:absolute;right:10px;bottom:33px}
      .tabs{display:flex;align-items:flex-start;height:34px;background:#333}
      .tab{display:flex;align-items:center;height:30px;padding:2px 5px 0;border:1px solid #202020;border-width:0 1px 2px;border-radius:0 0 3px 3px;color:#9a9a9a;background:#282828}
      .tab.on{height:33px;color:#fff;background:linear-gradient(#3a3a3a,#464646)}
      .tab button{padding:0;border:0;background:none;display:flex;align-items:center}
      .name{--icon:15px;gap:10px}
      .x{--icon:16px;margin-left:12px}`,
      `<div class="view"><fc-scene></fc-scene><fc-navcube></fc-navcube><fc-axiscross></fc-axiscross></div>
      <div class="tabs">
        <div class="tab"><button class="name"><fc-icon name="logo"></fc-icon>Start</button><button class="x" aria-label="Close Start"><fc-icon name="close"></fc-icon></button></div>
        <div class="tab on"><button class="name"><fc-icon name="doc"></fc-icon>the_Vani_pen_stand : 1*</button><button class="x" aria-label="Close document"><fc-icon name="close"></fc-icon></button></div>
      </div>`);
  }
});

customElements.define('fc-statusbar', class extends FcElement {
  connectedCallback() {
    this.paint(`:host{display:flex;align-items:center;height:30px;background:#333;gap:5px;padding:0 1px;--icon:15px}
      p{margin:0 auto 0 0}
      .c{display:flex;align-items:center;height:26px;border:1px solid #000;border-radius:3px;background:linear-gradient(#303030,#252525);padding:0 2px;width:90px}
      .c.cad{padding-left:23px}
      .c.dim{width:auto;height:23px;padding:0 1px 0 2px;gap:2px}
      select{flex:1;min-width:0;appearance:none;background:none;border:0;padding:0;outline:0}
      i{width:8px;height:4px;margin-left:auto;background:#bbb;clip-path:polygon(0 0,100% 0,50% 100%)}`,
      `<p><slot></slot></p>
      <button class="c" aria-label="Notifications"><fc-icon name="mail"></fc-icon><i></i></button>
      <div class="c cad"><fc-icon name="mouse"></fc-icon><select aria-label="Navigation style"><option>CAD</option></select><i></i></div>
      <button class="c dim">127.59 mm x 68.61 mm<i></i></button>`);
  }
});

customElements.define('fc-app', class extends FcElement {
  connectedCallback() {
    /* level, expander, icon, hidden, label */
    const rows = [
      [1, 'closed', 'pocketGray', 1, 'Pocket011'], [1, '', 'fillet2', 0, 'Fillet003'],
      [0, 'open', 'bodyGray', 1, 'Body005'], [1, 'closed', 'origin', 1, 'Origin005'], [1, 'closed', 'padGray', 1, 'Pad005'],
      [1, 'open', 'boolean2', 0, 'Boolean001'], [2, 'open', 'body', 0, 'Body003'],
      [3, 'closed', 'origin', 1, 'Origin003'], [3, 'closed', 'padGray', 1, 'Pad003'],
      [3, 'closed', 'pocketGray', 1, 'Pocket006'], [3, 'closed', 'pocketGray', 1, 'Pocket007'], [3, 'closed', 'pocketGray', 1, 'Pocket008'],
      [3, '', 'fillet2', 0, 'Fillet002'], [0, 'open', 'body', 0, 'Body006'], [1, 'open', 'origin', 1, 'Origin006'],
      [2, '', 'axis', 0, 'X-axis006'], [2, '', 'axis', 0, 'Y-axis006'], [2, '', 'axis', 0, 'Z-axis006'],
      [2, '', 'planeDark', 0, 'XY-plane006'], [2, '', 'planeDark', 0, 'XZ-plane006'], [2, '', 'planeDark', 0, 'YZ-plane006'],
      [1, 'open', 'padGray', 1, 'Pad006'], [2, '', 'sketchX', 1, 'Sketch018'], [1, 'open', 'boolGray', 1, 'Boolean002'],
      [2, 'closed', 'body', 0, 'Body'], [0, 'closed', 'bodyCheck', 0, 'Body007'], [0, '', 'plane', 1, 'XY-plane008'],
      [0, 'closed', 'bodyCheck', 0, 'Body008'], [0, '', 'plane', 1, 'XY-plane010']
    ];
    this.paint(`:host{display:flex;flex-direction:column;height:100vh}main{display:flex;flex:1;min-height:0}`,
      `<fc-titlebar>* the_Vani_pen_stand - FreeCAD 1.0.0</fc-titlebar>
      <fc-menubar items="File,Edit,View,Tools,Macro,Sketch,Part Design,Windows,Help"></fc-menubar>
      <fc-toolbar-row>
        <fc-toolbar tools="new open save"></fc-toolbar><fc-toolbar tools="undo redo | refresh"></fc-toolbar>
        <fc-toolbar><fc-workbench></fc-workbench></fc-toolbar>
        <fc-toolbar tools="zoomFit zoomSel cubeWire+ linkView | noDraw+ selCube+ zoomSync+ caliper"></fc-toolbar>
      </fc-toolbar-row>
      <fc-toolbar-row>
        <fc-toolbar tools="group folder link+ braces"></fc-toolbar><fc-toolbar tools="whats"></fc-toolbar>
        <fc-toolbar tools="body sketch+ sketchGray pawn binder sheep datum+"></fc-toolbar>
      </fc-toolbar-row>
      <fc-toolbar-row>
        <fc-toolbar tools="pad revolve loft pipe helix prim+ | pocket hole groove subLoft subPipe subHelix subPrim+ | boolean"></fc-toolbar>
        <fc-toolbar tools="fillet chamfer draft thick"></fc-toolbar><fc-toolbar tools="mirror linear polar multi"></fc-toolbar>
      </fc-toolbar-row>
      <main>
        <fc-dock><fc-tree>${rows.map(([l, s, i, off, t]) => `<fc-tree-item level="${l}" state="${s}" icon="${i}"${off ? ' off' : ''}>${t}</fc-tree-item>`).join('')}</fc-tree></fc-dock>
        <fc-viewport></fc-viewport>
      </main>
      <fc-statusbar>Preselected: the_Vani_pen_stand.Body004.Fillet003.Vertex43 (-8.50 mm, -26.50 mm, 20.00 mm)</fc-statusbar>`);
  }
});
</script>
</body>
</html>
